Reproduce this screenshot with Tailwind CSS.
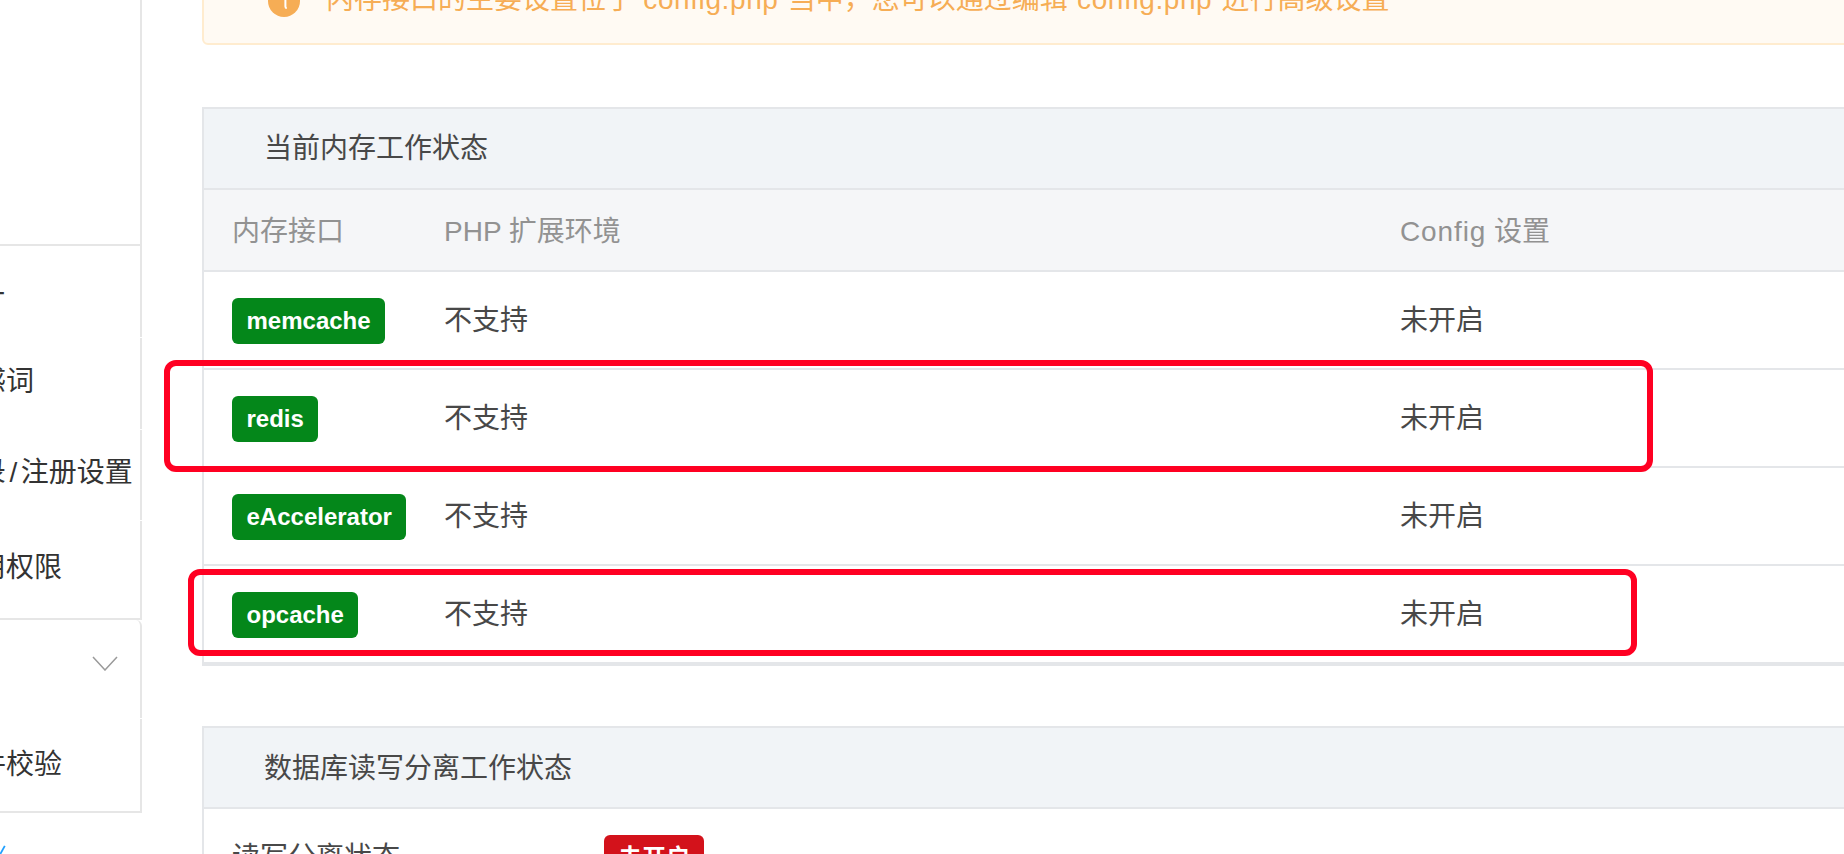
<!DOCTYPE html>
<html lang="zh-CN">
<head>
    <meta charset="UTF-8">
    <title>内存优化</title>
    <script src="https://cdn.jsdelivr.net/npm/@tailwindcss/browser@4"></script>
</head>
<body class="relative w-[1844px] h-[854px] overflow-hidden bg-white flex font-['Liberation_Sans','Noto_Sans_CJK_SC',sans-serif] text-[28px] text-[#484848]">

<!-- 左侧菜单 -->
<aside class="w-[142px] shrink-0 flex flex-col text-[#333] whitespace-nowrap overflow-hidden">
    <div class="h-[246px] shrink-0 border-r-2 border-b-2 border-[#e6e6e6]"></div>
    <div class="flex flex-col gap-px">
        <div class="h-[91px] border-r-2 border-[#e6e6e6] flex items-center pt-[13px]"><span class="ml-[-51px]">统计</span></div>
        <div class="h-[91px] border-r-2 border-[#e6e6e6] flex items-center pb-[4px]"><span class="ml-[-50px]">敏感词</span></div>
        <div class="h-[90px] border-r-2 border-[#e6e6e6] flex items-center pb-[4px]"><span class="ml-[-50px]">登录<span class="px-[3.5px]">/</span>注册设置</span></div>
        <div class="h-[99px] border-r-2 border-b-2 border-[#e6e6e6] flex items-center pb-[4px]"><span class="ml-[-50px]">应用权限</span></div>
    </div>
    <div class="flex flex-col gap-px">
        <div class="h-[98px] border-r-2 border-[#e6e6e6] rounded-tr-md flex items-center justify-end pr-[22px] pb-[12px]">
            <svg class="w-[26px] h-[15px]" viewBox="0 0 26 15" fill="none" stroke="#9a9a9a" stroke-width="1.5"><path d="M1 1l12 13L25 1"/></svg>
        </div>
        <div class="h-[94px] border-r-2 border-b-2 border-[#e6e6e6] flex items-center"><span class="ml-[-50px]">文件校验</span></div>
    </div>
    <svg class="w-[6px] h-[10px] mt-[32px]" viewBox="0 0 6 10" fill="none" stroke="#1e9fff" stroke-width="2"><path d="M0 10L5 1"/></svg>
</aside>

<!-- 主内容 -->
<main class="pl-[60px] w-[1900px] shrink-0">
    <div class="mt-[-45px] h-[90px] flex items-center gap-[26px] pl-[64px] bg-[#fffaf3] border-2 border-[#ffeccf] rounded-md text-[#f6ad55]">
        <svg class="w-8 h-8 shrink-0 mt-[2px]" viewBox="0 0 32 32"><circle cx="16" cy="16" r="16" fill="#f6ad55"/><path d="M15 11h2.4v10.5c0 1 .5 1.5 1.4 1.5" fill="none" stroke="#fff" stroke-width="2"/></svg>
        <span class="[word-spacing:1.5px]">内存接口的主要设置位于 <span class="tracking-[0.6px]">config.php</span> 当中，您可以通过编辑 <span class="tracking-[0.6px]">config.php</span> 进行高级设置</span>
    </div>

    <section class="mt-[62px] border-2 border-[#e4e6e9]">
        <div class="h-[81px] flex items-center pl-[60px] bg-[#f1f4f7] border-b-2 border-[#e4e6e9]">当前内存工作状态</div>
        <div class="h-[82px] grid grid-cols-[210px_956px_1fr] items-center pt-[3px] bg-[#f5f6f8] border-b-2 border-[#e4e6e9] text-[#929292]">
            <div class="pl-[28px]">内存接口</div>
            <div class="pl-[30px]">PHP 扩展环境</div>
            <div class="pl-[30px]"><span class="tracking-[0.9px]">Config</span> 设置</div>
        </div>
        <div class="h-[98px] grid grid-cols-[210px_956px_1fr] items-center pt-[2px] border-b-2 border-[#e4e6e9]">
            <div class="pl-[28px]"><span class="inline-flex items-center h-[46px] px-[14.5px] rounded-md bg-[#04871a] text-white text-[24px] font-bold">memcache</span></div>
            <div class="pl-[30px]">不支持</div>
            <div class="pl-[30px]">未开启</div>
        </div>
        <div class="h-[98px] grid grid-cols-[210px_956px_1fr] items-center pt-[2px] border-b-2 border-[#e4e6e9]">
            <div class="pl-[28px]"><span class="inline-flex items-center h-[46px] px-[14.5px] rounded-md bg-[#04871a] text-white text-[24px] font-bold">redis</span></div>
            <div class="pl-[30px]">不支持</div>
            <div class="pl-[30px]">未开启</div>
        </div>
        <div class="h-[98px] grid grid-cols-[210px_956px_1fr] items-center pt-[2px] border-b-2 border-[#e4e6e9]">
            <div class="pl-[28px]"><span class="inline-flex items-center h-[46px] px-[14.5px] rounded-md bg-[#04871a] text-white text-[24px] font-bold">eAccelerator</span></div>
            <div class="pl-[30px]">不支持</div>
            <div class="pl-[30px]">未开启</div>
        </div>
        <div class="h-[98px] grid grid-cols-[210px_956px_1fr] items-center pt-[2px] border-b-2 border-[#e4e6e9]">
            <div class="pl-[28px]"><span class="inline-flex items-center h-[46px] px-[14.5px] rounded-md bg-[#04871a] text-white text-[24px] font-bold">opcache</span></div>
            <div class="pl-[30px]">不支持</div>
            <div class="pl-[30px]">未开启</div>
        </div>
    </section>

    <section class="mt-[60px] border-2 border-[#e4e6e9]">
        <div class="h-[81px] flex items-center pl-[60px] pt-[2px] bg-[#f1f4f7] border-b-2 border-[#e4e6e9]">数据库读写分离工作状态</div>
        <div class="h-[98px] grid grid-cols-[400px_1fr] items-center">
            <div class="pl-[28px]">读写分离状态</div>
            <div><span class="inline-flex items-center h-[46px] px-[14px] rounded-md bg-[#d3121b] text-white text-[24px] font-bold">未开启</span></div>
        </div>
    </section>
</main>

<!-- 红框标注 -->
<div class="absolute left-[164px] top-[360px] w-[1489px] h-[112px] border-[6px] border-[#ff0022] rounded-[12px]"></div>
<div class="absolute left-[188px] top-[569px] w-[1449px] h-[87px] border-[6px] border-[#ff0022] rounded-[12px]"></div>

</body>
</html>
